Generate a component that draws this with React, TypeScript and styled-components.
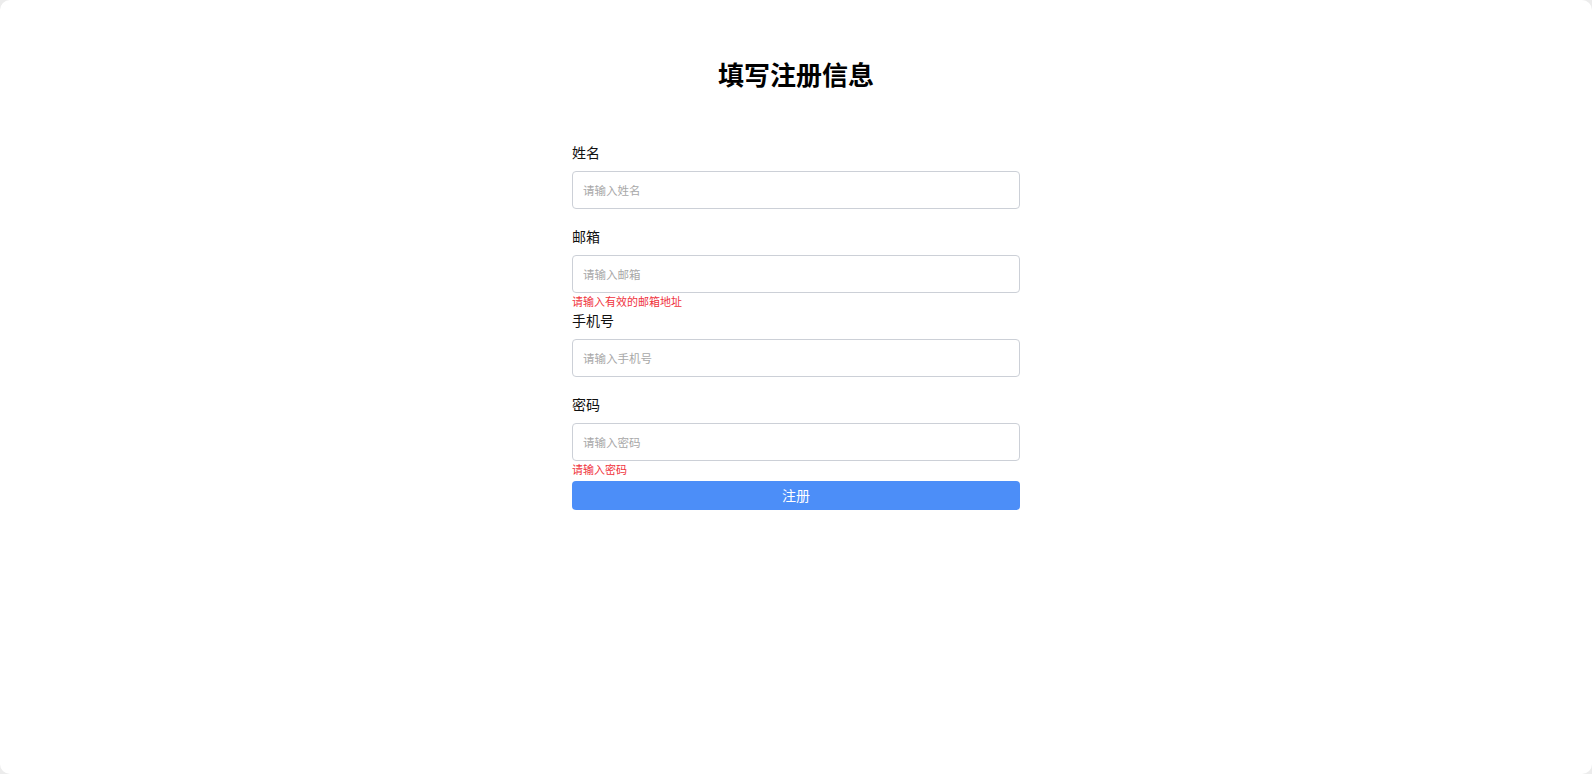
import styled, { createGlobalStyle } from "styled-components"

const GlobalStyle = createGlobalStyle`
  html, body {
    margin: 0;
    padding: 0;
    background: #ececec;
  }
  * {
    box-sizing: border-box;
  }
`

const Page = styled.main`
  min-height: 100vh;
  background: #fff;
  border-radius: 10px;
  padding-top: 56px;
  font-family: "Noto Sans CJK SC", "Noto Sans", sans-serif;
  color: #111;
`

const Title = styled.h1`
  margin: 0 0 50px;
  font-size: 26px;
  line-height: 36px;
  font-weight: 700;
  text-align: center;
  color: #000;
`

const Form = styled.form`
  width: 448px;
  margin: 0 auto;
  display: flex;
  flex-direction: column;
`

const Field = styled.div`
  display: flex;
  flex-direction: column;
`

const Label = styled.label`
  font-size: 14px;
  line-height: 20px;
  margin-bottom: 9px;
`

const Input = styled.input`
  height: 38px;
  padding: 0 10px;
  border: 1px solid #ccd0d7;
  border-radius: 4px;
  font-family: inherit;
  font-size: 11.5px;
  color: #333;
  outline: none;

  &::placeholder {
    color: #a8a8a8;
  }
`

const ErrorSlot = styled.div`
  height: 17px;
  font-size: 11px;
  line-height: 16px;
  color: #f0323c;
`

const SubmitButton = styled.button`
  margin-top: 3px;
  height: 29px;
  padding: 0 0 2px;
  border: none;
  border-radius: 4px;
  background: #4c8ef8;
  color: #fff;
  font-family: inherit;
  font-size: 14px;
  cursor: pointer;
`

interface FieldRowProps {
  name: string
  label: string
  type?: string
  error?: string
}

const FieldRow = ({ name, label, type = "text", error }: FieldRowProps) => (
  <Field>
    <Label htmlFor={name}>{label}</Label>
    <Input id={name} type={type} placeholder={`请输入${label}`} />
    <ErrorSlot>{error}</ErrorSlot>
  </Field>
)

function App() {
  return (
    <>
      <GlobalStyle />
      <Page>
        <Title>填写注册信息</Title>
        <Form onSubmit={(e) => e.preventDefault()}>
          <FieldRow name="name" label="姓名" />
          <FieldRow name="email" label="邮箱" error="请输入有效的邮箱地址" />
          <FieldRow name="phone" label="手机号" />
          <FieldRow name="password" label="密码" type="password" error="请输入密码" />
          <SubmitButton type="submit">注册</SubmitButton>
        </Form>
      </Page>
    </>
  )
}

export default App
